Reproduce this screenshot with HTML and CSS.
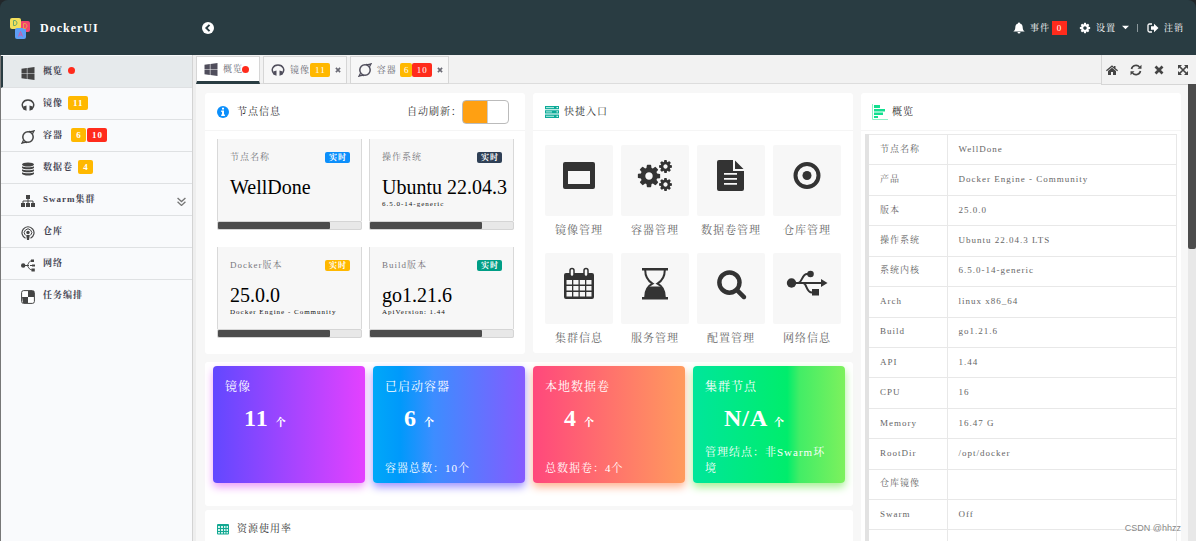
FILE: index.html
```html
<!DOCTYPE html>
<html lang="zh-CN">
<head>
<meta charset="utf-8">
<title>DockerUI</title>
<link rel="stylesheet" href="styles.css">
</head>
<body>
<svg class="sprite" aria-hidden="true">
  <symbol id="windows" viewBox="0 0 1792 1792"><path d="M746 1006v651l-682-94v-557h682zm0-743v659h-682v-565zm982 743v786l-907-125v-661h907zm0-878v794h-907v-669z"/></symbol>
  <symbol id="image" viewBox="0 0 14 14"><path d="M3.2 11.2C-.8 7 2 2 7 2s7.8 5 3.8 9.200" fill="none" stroke="currentColor" stroke-width="1.500"/><path d="M2.300 8.600L5.500 7.500v5.200L2.800 11.800zM11.700 8.600L8.500 7.500v5.200l2.700-.9z"/></symbol>
  <symbol id="container" viewBox="0 0 14 14"><circle cx="7" cy="7" r="5.200" fill="none" stroke="currentColor" stroke-width="1.500"/><path d="M8 1.400c2 .4 3.500 0 5-.6l-1.500 3M6 12.600c-2-.4-3.500 0-5 .6l1.500-3" fill="none" stroke="currentColor" stroke-width="1.300"/></symbol>
  <symbol id="database" viewBox="0 0 14 14"><ellipse cx="7" cy="2.500" rx="6" ry="2"/><path d="M1 4.200c2 1.500 10 1.500 12 0v1.500c-1 2.200-11 2.200-12 0zM1 7.200c2 1.500 10 1.500 12 0v1.500c-1 2.200-11 2.200-12 0zM1 10.200c2 1.500 10 1.500 12 0v1.500c-1 2.400-11 2.400-12 0z"/></symbol>
  <symbol id="sitemap" viewBox="0 0 14 14"><path d="M5 1h4v4H5zM0 9h4v4H0zM5 9h4v4H5zM10 9h4v4h-4z"/><path d="M7 4v6M2 10V7h10v3" fill="none" stroke="currentColor"/></symbol>
  <symbol id="podcast" viewBox="0 0 14 14"><g fill="none" stroke="currentColor"><path d="M4.500 12.200a6 6 0 1 1 5 0" stroke-width="1.200"/><path d="M4.400 9.300a3.700 3.700 0 1 1 5.200 0"/></g><circle cx="7" cy="6.500" r="1.700"/><path d="M5.200 9h3.600L8 14H6z"/></symbol>
  <symbol id="share" viewBox="0 0 14 14"><circle cx="2.200" cy="7.500" r="2.200"/><path d="M2 7.500h6M5.500 7.500C8 7 7 2.800 11 2.800M5.500 7.500C8 8 7 12 12 12M9 7.500h3" fill="none" stroke="currentColor"/><path d="M10 1.500h3v2.600h-3zM10.500 10.500h3.300v3h-3.300zM11 6.500h3v2h-3z"/></symbol>
  <symbol id="board" viewBox="0 0 14 14"><rect x=".6" y=".6" width="12.800" height="12.800" rx="2" fill="#fff" stroke="currentColor" stroke-width="1"/><path d="M7 1h6v6H7zM1 7h6v6H2z"/></symbol>
  <symbol id="cog" viewBox="0 0 1792 1792"><path d="M1152 896q0-106-75-181t-181-75-181 75-75 181 75 181 181 75 181-75 75-181zm512-109v222q0 12-8 23t-20 13l-185 28q-19 54-39 91 35 50 107 138 10 12 10 25t-9 23q-27 37-99 108t-94 71q-12 0-26-9l-138-108q-44 23-91 38-16 136-29 186-7 28-36 28h-222q-14 0-24.500-8.500t-11.500-21.500l-28-184q-49-16-90-37l-141 107q-10 9-25 9-14 0-25-11-126-114-165-168-7-10-7-23 0-12 8-23 15-21 51-66.500t54-70.500q-27-50-41-99l-183-27q-13-2-21-12.500t-8-23.500v-222q0-12 8-23t19-13l186-28q14-46 39-92-40-57-107-138-10-12-10-24 0-10 9-23 26-36 98.500-107.500t94.500-71.500q13 0 26 10l138 107q44-23 91-38 16-136 29-186 7-28 36-28h222q14 0 24.500 8.500t11.500 21.500l28 184q49 16 90 37l142-107q9-9 24-9 13 0 25 10 129 119 165 170 7 8 7 22 0 12-8 23-15 21-51 66.500t-54 70.500q26 50 41 98l183 28q13 2 21 12.500t8 23.500z"/></symbol>
  <symbol id="close" viewBox="0 0 10 10"><path d="M1.500 1.500l7 7M8.500 1.500l-7 7" fill="none" stroke="currentColor" stroke-width="2.700"/></symbol>
</svg>

<header class="topbar">
  <a class="brand" href="#">
    <svg class="logo" viewBox="0 0 22 22" aria-hidden="true">
      <rect x="11" y="4" width="10" height="11" rx="2" fill="#f4436c"/><rect x="1" y="1" width="11" height="11" rx="2" fill="#f3df5c"/><rect x="6" y="11" width="11" height="11" rx="2" fill="#5d9df5"/>
      <g fill="none" stroke-width="1"><path d="M4.500 3.500v5h1.500q2-.5 2-2.500t-2-2.500z" stroke="#69a86b"/><path d="M14.500 6.500v5h1.500q2-.5 2-2.500t-2-2.500z" stroke="#e8a04c"/><path d="M9.500 19.500l2-5 2 5M10.300 18h2.500" stroke="#d05aa5"/></g>
    </svg>
    <span>DockerUI</span>
  </a>
  <button class="collapse" aria-label="收起菜单"><svg viewBox="0 0 12 12"><circle cx="6" cy="6" r="6" fill="#fff"/><path d="M7.500 2.800L4.300 6l3.200 3.200" fill="none" stroke="#293c42" stroke-width="1.900"/></svg></button>
  <nav class="topnav">
    <a href="#"><svg class="i12" viewBox="0 0 12 12"><path d="M6 .5c.6 0 1 .4 1 1C9 2 9.600 3.500 9.700 5.500c.1 2 .7 3.200 2 4H.3c1.300-.8 1.900-2 2-4C2.400 3.500 3 2 5 1.500c0-.6.4-1 1-1zM4.500 10h3a1.500 1.500 0 0 1-3 0z"/></svg><span>事件</span><b class="count">0</b></a>
    <button class="settings"><svg class="i12"><use href="#cog"/></svg><span>设置</span><svg class="caret" viewBox="0 0 8 5"><path d="M0 .5h8L4 4.500z"/></svg></button>
    <i class="divider"></i>
    <a href="#"><svg class="i12" viewBox="0 0 12 12"><path d="M5 2H2.500Q1 2 1 3.500v5Q1 10 2.500 10H5" fill="none" stroke="currentColor" stroke-width="1.300"/><path d="M4 4.200h3V1.800L11.500 6 7 10.200V7.800H4z"/></svg><span>注销</span></a>
  </nav>
</header>

<div class="shell">
  <aside class="sidebar">
    <a class="item active" href="#"><svg class="i14"><use href="#windows"/></svg><span>概览</span><i class="dot"></i></a>
    <a class="item" href="#"><svg class="i14"><use href="#image"/></svg><span>镜像</span><b class="badge amber">11</b></a>
    <a class="item" href="#"><svg class="i14"><use href="#container"/></svg><span>容器</span><span class="pair"><b class="badge amber">6</b><b class="badge red">10</b></span></a>
    <a class="item" href="#"><svg class="i14"><use href="#database"/></svg><span>数据卷</span><b class="badge amber">4</b></a>
    <a class="item" href="#"><svg class="i14"><use href="#sitemap"/></svg><span>Swarm集群</span><svg class="more" viewBox="0 0 8 8"><path d="M.5 .8L4 4l3.500-3.200M.5 4.300L4 7.500l3.500-3.200" fill="none" stroke="currentColor" stroke-width="1.200"/></svg></a>
    <a class="item" href="#"><svg class="i14"><use href="#podcast"/></svg><span>仓库</span></a>
    <a class="item" href="#"><svg class="i14"><use href="#share"/></svg><span>网络</span></a>
    <a class="item last" href="#"><svg class="i14"><use href="#board"/></svg><span>任务编排</span></a>
  </aside>

  <main class="main">
    <div class="tabs">
      <div class="tab current"><svg class="i14"><use href="#windows"/></svg><span>概览</span><i class="dot"></i></div>
      <div class="tab"><svg class="i14"><use href="#image"/></svg><span>镜像</span><b class="badge amber">11</b><button class="x" aria-label="关闭镜像"><svg><use href="#close"/></svg></button></div>
      <div class="tab"><svg class="i14"><use href="#container"/></svg><span>容器</span><span class="pair tight"><b class="badge amber">6</b><b class="badge red">10</b></span><button class="x" aria-label="关闭容器"><svg><use href="#close"/></svg></button></div>
      <div class="tools">
        <button aria-label="主页"><svg viewBox="0 0 12 12"><path d="M6 1.200l2 1.700V2h1.500v2.200L12 6.300l-.8.9L6 2.900.8 7.200 0 6.300zM6 3.800l4 3.300V11H7V8H5v3H2V7.100z"/></svg></button>
        <button aria-label="刷新"><svg viewBox="0 0 12 12"><path d="M1.500 5a4.600 4.600 0 0 1 8-2M10.500 7a4.600 4.600 0 0 1-8 2" fill="none" stroke="currentColor" stroke-width="1.600"/><path d="M11.500.8v4h-4zM.5 11.200v-4h4z"/></svg></button>
        <button aria-label="关闭"><svg viewBox="-1 -1 12 12"><path d="M1.500 1.500l7 7M8.500 1.500l-7 7" fill="none" stroke="currentColor" stroke-width="2.700"/></svg></button>
        <button aria-label="全屏"><svg viewBox="0 0 12 12"><path d="M2 2l8 8M10 2l-8 8" fill="none" stroke="currentColor" stroke-width="1.700"/><path d="M1 1h4L1 5zM11 1v4L7 1zM1 11V7l4 4zM11 11H7l4-4z"/></svg></button>
      </div>
    </div>

    <div class="viewport">
      <div class="content">
        <section class="panel">
          <header class="head">
            <svg class="i12" viewBox="0 0 12 12"><circle cx="6" cy="6" r="6" fill="#0c8ffb"/><path d="M5 1.800h2v1.700H5zM4.200 4.600H7v4h.9V10H4.200V8.600H5V6h-.8z" fill="#fff"/></svg>
            <h2>节点信息</h2>
            <label class="auto" for="auto">自动刷新：</label><input class="switch" id="auto" type="checkbox" checked>
          </header>
          <div class="nodes">
            <article class="node"><div class="body"><h3>节点名称<b class="tag blue">实时</b></h3><p class="value">WellDone</p><p class="sub"></p></div><div class="bar"><i></i></div></article>
            <article class="node"><div class="body"><h3>操作系统<b class="tag navy">实时</b></h3><p class="value">Ubuntu 22.04.3</p><p class="sub">6.5.0-14-generic</p></div><div class="bar"><i></i></div></article>
            <article class="node"><div class="body"><h3>Docker版本<b class="tag amber">实时</b></h3><p class="value">25.0.0</p><p class="sub">Docker Engine - Community</p></div><div class="bar"><i></i></div></article>
            <article class="node"><div class="body"><h3>Build版本<b class="tag green">实时</b></h3><p class="value">go1.21.6</p><p class="sub">ApiVersion: 1.44</p></div><div class="bar"><i></i></div></article>
          </div>
        </section>

        <section class="panel">
          <header class="head tighter">
            <svg class="i14" viewBox="0 0 14 12"><path d="M0 0h14v3.300H0zM0 4.300h14v3.300H0zM0 8.600h14V12H0z" fill="#0daa98"/><path d="M1 1.600h8M1 5.900h6M1 10.300h8" stroke="#b7eee5"/><path d="M11.500 1.600H13M11.500 5.900H13M11.500 10.300H13" stroke="#fff"/></svg>
            <h2>快捷入口</h2>
          </header>
          <nav class="quick">
            <a href="#"><i><svg viewBox="0 0 36 36"><path fill-rule="evenodd" d="M4 5h28q2 0 2 2v23q0 2-2 2H4q-2 0-2-2V7q0-2 2-2zm3 9v13h22V14z"/></svg></i><span>镜像管理</span></a>
            <a href="#"><i><svg viewBox="0 0 36 36"><use href="#cog" x="-1" y="6" width="26" height="26"/><use href="#cog" x="21" y="2" width="15" height="15"/><use href="#cog" x="21" y="20" width="15" height="15"/></svg></i><span>容器管理</span></a>
            <a href="#"><i><svg viewBox="0 0 36 36"><path fill-rule="evenodd" d="M6 3h14v11h11v18q0 2-2 2H6q-2 0-2-2V5q0-2 2-2zm5 13v1.700h13V16zm0 5v1.700h13V21zm0 5v1.700h13V26z"/><path d="M22 3.500L30.500 12H22z"/></svg></i><span>数据卷管理</span></a>
            <a href="#"><i><svg viewBox="0 0 36 36"><circle cx="18" cy="18.500" r="11.500" fill="none" stroke="currentColor" stroke-width="4"/><circle cx="18" cy="18.500" r="4.500"/></svg></i><span>仓库管理</span></a>
            <a href="#"><i><svg viewBox="0 0 36 36"><path fill-rule="evenodd" d="M5 8h26q2 0 2 2v22q0 2-2 2H5q-2 0-2-2V10q0-2 2-2zm.500 7v4.500h5.500V15zm6.800 0v4.500h5.200V15zm6.500 0v4.500h5.200V15zm6.500 0v4.500h5.200V15zM5.500 21v4.500h5.500V21zm6.800 0v4.500h5.200V21zm6.500 0v4.500h5.200V21zm6.500 0v4.500h5.200V21zM5.500 27v4.500h5.500V27zm6.800 0v4.500h5.200V27zm6.500 0v4.500h5.200V27zm6.500 0v4.500h5.200V27z"/><rect x="9" y="3.500" width="4" height="8" rx="2" fill="#f7f7f7" stroke="currentColor" stroke-width="1.500"/><rect x="23" y="3.500" width="4" height="8" rx="2" fill="#f7f7f7" stroke="currentColor" stroke-width="1.500"/></svg></i><span>集群信息</span></a>
            <a href="#"><i><svg viewBox="0 0 36 36"><path d="M5 3h26v2.400H5zM5 32h26v2.400H5zM8 32c0-6 2-9.500 5-10.500h10c3 1 5 4.500 5 10.500z"/><path d="M8.200 5c0 7 3 11 7.300 13.700C11 21 8.200 26 8.200 32M27.800 5c0 7-3 11-7.300 13.700C25 21 27.800 26 27.800 32" fill="none" stroke="currentColor" stroke-width="2"/></svg></i><span>服务管理</span></a>
            <a href="#"><i><svg viewBox="0 0 36 36"><g transform="translate(3 3) scale(.0175)"><path d="M1216 832q0-185-131.500-316.500t-316.500-131.500-316.500 131.500-131.500 316.500 131.500 316.500 316.500 131.500 316.500-131.500 131.500-316.500zm512 832q0 52-38 90t-90 38q-54 0-90-38l-343-342q-179 124-399 124-143 0-273.500-55.500t-225-150-150-225-55.500-273.500 55.500-273.500 150-225 225-150 273.500-55.500 273.500 55.500 225 150 150 225 55.500 273.500q0 220-124 399l343 343q37 37 37 90z"/></g></svg></i><span>配置管理</span></a>
            <a href="#"><i><svg class="wide" viewBox="0 0 42 36"><circle cx="5.500" cy="18" r="4.700"/><circle cx="24.500" cy="9" r="3.300"/><path d="M26 24h7v6.500h-7zM35 14l6.500 4-6.500 4z"/><path d="M5 18h31M12 18c4 0 4-9 9-9h3M17 18c4 0 3 9.500 9 9.500" fill="none" stroke="currentColor" stroke-width="2"/></svg></i><span>网络信息</span></a>
          </nav>
        </section>

        <section class="panel overview">
          <header class="head">
            <svg class="i16" viewBox="0 0 16 16"><path d="M2 1h6v3H2zM2 5h11v2.500H2zM2 8.500h9V11H2zM2 12h4v2H2z" fill="#12df8f"/><path d="M.5 0v15.500H16" fill="none" stroke="#8ff0c6"/></svg>
            <h2>概览</h2>
          </header>
          <table>
            <tr><th scope="row">节点名称</th><td>WellDone</td></tr>
            <tr><th scope="row">产品</th><td>Docker Engine - Community</td></tr>
            <tr><th scope="row">版本</th><td>25.0.0</td></tr>
            <tr><th scope="row">操作系统</th><td>Ubuntu 22.04.3 LTS</td></tr>
            <tr><th scope="row">系统内核</th><td>6.5.0-14-generic</td></tr>
            <tr><th scope="row">Arch</th><td>linux x86_64</td></tr>
            <tr><th scope="row">Build</th><td>go1.21.6</td></tr>
            <tr><th scope="row">API</th><td>1.44</td></tr>
            <tr><th scope="row">CPU</th><td>16</td></tr>
            <tr><th scope="row">Memory</th><td>16.47 G</td></tr>
            <tr><th scope="row">RootDir</th><td>/opt/docker</td></tr>
            <tr><th scope="row">仓库镜像</th><td></td></tr>
            <tr><th scope="row">Swarm</th><td>Off</td></tr>
            <tr><th scope="row">ClusterID</th><td></td></tr>
          </table>
        </section>

        <section class="panel stats">
          <article class="stat violet"><h3>镜像</h3><p class="num">11 <small>个</small></p></article>
          <article class="stat azure"><h3>已启动容器</h3><p class="num">6 <small>个</small></p><p class="foot">容器总数：10个</p></article>
          <article class="stat coral"><h3>本地数据卷</h3><p class="num">4 <small>个</small></p><p class="foot">总数据卷：4个</p></article>
          <article class="stat mint"><h3>集群节点</h3><p class="num">N/A <small>个</small></p><p class="foot">管理结点：非Swarm环境</p></article>
        </section>

        <section class="panel usage">
          <header class="head">
            <svg class="i12" viewBox="0 0 12 12"><rect y="1" width="12" height="10.500" rx="1" fill="#12a892"/><path d="M1 3h2v2H1zM4 3h2v2H4zM7 3h1.500v2H7zM9.500 3H11v2H9.500zM1 6h2v2H1zM4 6h2v2H4zM7 6h1.500v2H7zM9.500 6H11v2H9.500zM1 9h2v1.500H1zM4 9h2v1.500H4zM7 9h1.500v1.500H7zM9.500 9H11v1.500H9.500z" fill="#d5f4ee"/></svg>
            <h2>资源使用率</h2>
          </header>
        </section>
      </div>
      <div class="scroll"><i></i></div>
    </div>
  </main>
</div>
<div class="watermark">CSDN @hhzz</div>
</body>
</html>
```
FILE: styles.css
```css
* { box-sizing: border-box; }
body {
  margin: 0;
  height: 100vh;
  overflow: hidden;
  display: flex;
  flex-direction: column;
  background: #22272a;
  color: #333;
  font: 9px/16px "Liberation Serif", "Noto Serif CJK SC", "Noto Sans CJK SC", serif;
  letter-spacing: 1px;
}
h2, h3, p { margin: 0; font-weight: normal; }
a { color: inherit; text-decoration: none; }
button { border: 0; padding: 0; background: none; color: inherit; font: inherit; letter-spacing: inherit; }
svg { display: block; flex: none; fill: currentColor; }
.sprite { position: absolute; width: 0; height: 0; }
.i12 { width: 12px; height: 12px; }
.i14 { width: 14px; height: 14px; }
.i16 { width: 16px; height: 16px; }

.topbar {
  flex: none;
  height: 55px;
  display: flex;
  align-items: center;
  padding: 0 12px 0 9px;
  background: #293c42;
  color: #fff;
  border-radius: 8px 8px 0 0;
}
.brand { width: 193px; display: flex; align-items: center; gap: 9px; font-size: 12px; font-weight: bold; }
.logo { width: 22px; height: 22px; }
.collapse svg { width: 12px; height: 12px; }
.topnav { margin-left: auto; display: flex; align-items: center; }
.topnav a, .settings { display: flex; align-items: center; gap: 5px; }
.settings { margin: 0 8px 0 12px; }
.settings .caret { width: 7px; height: 5px; margin-left: 1px; }
.count { width: 15px; margin-left: -3px; background: #ff2b1c; font-weight: normal; line-height: 14px; text-align: center; }
.divider { width: 1px; height: 8px; margin-right: 9px; background: #8b979b; }

.shell { flex: 1; min-height: 0; display: flex; }
.sidebar {
  flex: none;
  width: 193px;
  padding-top: 1px;
  background: #f9fafc;
  border-left: 1px solid #777;
  border-right: 1px solid #d3d3d3;
}
.item {
  height: 32px;
  display: flex;
  align-items: center;
  padding: 0 6px 2px 20px;
  border-bottom: 1px solid #dfe1e3;
  color: #434351;
  font-weight: bold;
}
.item .i14 { margin: 4px 8px 0 0; color: #444; }
.item.active { background: #e6eaec; border-left: 2px solid #293c42; padding-left: 18px; }
.item.last { border-bottom: 0; }
.item .dot { margin-left: 5px; }
.item > .badge, .item .pair { margin-left: 5px; }
.item .pair { margin-left: 8px; }
.dot { width: 7px; height: 7px; border-radius: 50%; background: #ff2b1c; }
.badge { min-width: 15px; padding: 0 4px 0 5px; border-radius: 2px; color: #fff; line-height: 14px; text-align: center; }
.pair { display: flex; gap: 1px; }
.amber { background: #ffb800; }
.red { background: #ff2b1c; }
.blue { background: #0c8ffb; }
.navy { background: #2f4056; }
.green { background: #009e86; }
.more { width: 9px; height: 9px; margin: 6px 0 0 auto; color: #777; }

.main { flex: 1; min-width: 0; display: flex; flex-direction: column; background: #f7f7f7; border-left: 3px solid #eee; }
.tabs { flex: none; height: 29px; display: flex; gap: 3px; background: #f2f2f2; border-bottom: 1px solid #ddd; }
.tab {
  display: flex;
  align-items: center;
  height: 28px;
  margin-top: 1px;
  padding: 0 5px 1px 7px;
  border: 1px solid #d6d6d6;
  background: #f7f7f7;
  color: #6b6b75;
}
.tab .i14 { margin-right: 5px; color: #504e5c; }
.tab .badge { font-weight: normal; }
.tab.current { padding: 0 10px 0 7px; background: #fff; border-bottom: 3px solid #293c42; }
.tab.current .dot { margin-left: -1px; }
.pair.tight { gap: 0; margin-left: 3px; }
.tight .amber { min-width: 12px; padding: 0 2px 0 4px; }
.x { margin-left: 5px; }
.x svg { width: 6px; height: 6px; }
.tools { width: 95px; height: 30px; margin-left: auto; padding: 0 7px 0 4px; display: flex; align-items: center; justify-content: space-between; border: solid #d6d6d6; border-width: 0 0 1px 1px; background: #f2f2f2; color: #444; }
.tools svg { width: 12px; height: 12px; }

.viewport { flex: 1; min-height: 0; display: flex; overflow: hidden; }
.content {
  flex: 1;
  display: grid;
  grid-template-columns: repeat(3, minmax(0, 1fr));
  grid-template-rows: auto auto 1fr;
  column-gap: 8px;
  align-items: start;
  padding: 9px 7px 0 9px;
}
.scroll { width: 8px; background: #e8e8e8; }
.scroll i { display: block; height: 36%; background: #4c4c4c; border-radius: 0 0 2px 2px; }
.panel { background: #fff; border-radius: 3px; }
.head { height: 38px; display: flex; align-items: center; gap: 8px; padding: 0 16px 0 12px; border-bottom: 1px solid #f5f5f5; }
.head.tighter { gap: 5px; }
.head h2 { font-size: 10px; }
.auto { margin-left: auto; font-size: 10px; }
.switch {
  appearance: none;
  width: 47px;
  height: 24px;
  margin: 0 0 0 -8px;
  border: 1px solid #bbb;
  border-radius: 4px;
  background: linear-gradient(90deg, #ffa012 24px, #ccc 24px, #ccc 25px, #fff 25px);
}

.nodes { display: grid; grid-template-columns: 1fr 1fr; gap: 17px 7px; padding: 8px 11px 16px 12px; }
.node { min-width: 0; background: #f7f7f7; }
.node .body { height: 82px; padding: 10px 11px 0 12px; border: solid #d9d9d9; border-width: 0 1px; }
.node h3 { display: flex; align-items: center; justify-content: space-between; font-size: 9px; color: #77777d; }
.tag { padding: 0 3px 0 4px; border-radius: 2px; color: #fff; font-size: 8px; line-height: 11px; }
.value { margin-top: 12px; color: #000; font-size: 20px; line-height: 21px; letter-spacing: normal; white-space: nowrap; }
.sub { color: #111; font-size: 7px; line-height: 12px; white-space: nowrap; }
.bar { height: 9px; background: #e8e8e8; border: 1px solid #d5d5d5; border-radius: 2px; }
.bar i { display: block; width: 78%; height: 100%; background: #4c4c4c; border-radius: 1px; }

.quick { display: grid; grid-template-columns: repeat(4, 1fr); gap: 12px 8px; padding: 14px 12px 4px; }
.quick a { display: flex; flex-direction: column; gap: 4px; align-items: center; color: #666; font-size: 11px; line-height: 21px; }
.quick i { width: 100%; height: 71px; padding-bottom: 11px; display: grid; place-items: center; background: #f7f7f7; border-radius: 2px; color: #333; }
.quick svg { width: 36px; height: 36px; overflow: visible; }
.quick .wide { width: 42px; }

.overview { grid-column: 3; grid-row: 1 / 4; padding: 0 4px 20px; }
.overview .head { margin: 0 -4px; gap: 4px; padding-left: 11px; }
.overview table { width: 100%; height: 427px; margin-top: 3px; border-collapse: collapse; border: 1px solid #e2e2e2; border-left: 4px solid #e2e2e2; }
.overview th, .overview td { padding: 0 11px 2px; border: 1px solid #e8e8e8; color: #666; font-weight: normal; text-align: left; }
.overview th { width: 80px; border-left: 4px solid #e2e2e2; }

.stats { grid-column: 1 / 3; margin-top: 8px; padding: 4px 8px 23px; display: grid; grid-template-columns: repeat(4, 1fr); gap: 8px; }
.stat { height: 117px; display: flex; flex-direction: column; padding: 12px 12px 7px; border-radius: 4px; color: #fff; }
.stat h3 { font-size: 12px; line-height: 18px; }
.num { margin: 10px 0 0 19px; font-size: 24px; line-height: 24px; font-weight: bold; }
.num small { font-size: 10px; }
.foot { margin-top: auto; font-size: 11px; line-height: 16px; }
.violet { background: linear-gradient(90deg, #6248ff, #e441ff); box-shadow: 0 4px 8px #ec9cf8; }
.azure { background: linear-gradient(90deg, #00a8f8, #0099fb 18%, #3d8dff 40%, #855aff); box-shadow: 0 4px 8px #9d92ff; }
.coral { background: linear-gradient(90deg, #ff487c, #ff9b5d); box-shadow: 0 4px 8px #ffb391; }
.mint { background: linear-gradient(90deg, #00e69b, #00ed6c 62%, #42ed66 70%, #7df15d); box-shadow: 0 4px 8px #a4f091; }
.usage { grid-column: 1 / 3; height: 100%; margin-top: 4px; }

.watermark { position: absolute; right: 15px; bottom: 6px; color: #888; font: 9px/14px "Liberation Sans", sans-serif; letter-spacing: normal; }
```
